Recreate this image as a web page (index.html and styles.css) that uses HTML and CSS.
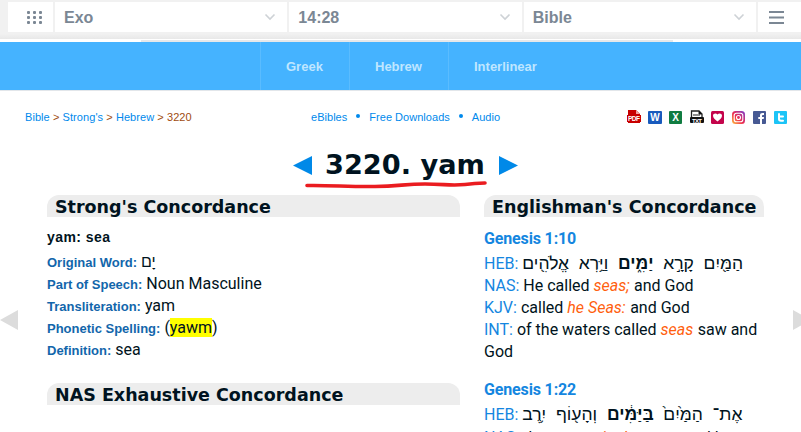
FILE: index.html
```
<!DOCTYPE html>
<html lang="en">
<head>
  <meta charset="UTF-8">
  <meta name="viewport" content="width=device-width, initial-scale=1.0">
  <title>Strong's Hebrew: 3220. yam</title>
  <link rel="stylesheet" href="styles.css">
</head>
<body>
  <header class="toolbar">
    <div class="tool grid-tool">
      <svg width="16" height="14" viewBox="0 0 16 14" fill="#7b8794">
        <rect x="0" y="1" width="3" height="3" rx="1"/><rect x="6" y="1" width="3" height="3" rx="1"/><rect x="12" y="1" width="3" height="3" rx="1"/>
        <rect x="0" y="6" width="3" height="3" rx="1"/><rect x="6" y="6" width="3" height="3" rx="1"/><rect x="12" y="6" width="3" height="3" rx="1"/>
        <rect x="0" y="11" width="3" height="3" rx="1"/><rect x="6" y="11" width="3" height="3" rx="1"/><rect x="12" y="11" width="3" height="3" rx="1"/>
      </svg>
    </div>
    <div class="tool select"><span>Exo</span><svg class="chevron" viewBox="0 0 12 8"><path d="M1.500 1.500 6 6l4.500-4.500"/></svg></div>
    <div class="tool select"><span>14:28</span><svg class="chevron" viewBox="0 0 12 8"><path d="M1.500 1.500 6 6l4.500-4.500"/></svg></div>
    <div class="tool select"><span>Bible</span><svg class="chevron" viewBox="0 0 12 8"><path d="M1.500 1.500 6 6l4.500-4.500"/></svg></div>
    <div class="tool menu-tool">
      <svg width="15" height="13" viewBox="0 0 15 13" fill="#7b8794"><path d="M0 0h15v2H0zM0 5.500h15v2H0zM0 11h15v2H0z"/></svg>
    </div>
  </header>
  <div class="strip"><i></i></div>
  <nav class="menu">
    <a class="greek">Greek</a>
    <a class="hebrew">Hebrew</a>
    <a class="inter">Interlinear</a>
  </nav>

  <div class="crumbs">
    <div class="path"><a>Bible</a> &gt; <a>Strong's</a> &gt; <a>Hebrew</a> &gt; 3220</div>
    <div class="links"><a>eBibles</a><b></b><a>Free Downloads</a><b></b><a>Audio</a></div>
    <div class="icons">
      <svg viewBox="0 0 14 14"><path fill="#c80000" d="M1 0h8l4 4v9H1z"/><path fill="#f0a0a0" d="M9 0v4h4z"/><rect y="5" width="14" height="7" fill="#c80000"/><text x="7" y="11" font-size="6.500" textLength="12">PDF</text></svg>
      <svg viewBox="0 0 14 14"><rect y="1" width="14" height="13" rx="1" fill="#185abd"/><text x="7" y="11" font-size="10">W</text></svg>
      <svg viewBox="0 0 14 14"><rect y="1" width="13" height="13" rx="1" fill="#107c41"/><text x="6.500" y="11" font-size="10">X</text></svg>
      <svg viewBox="0 0 14 14"><path fill="#fff" stroke="#222" stroke-width="1.300" d="M1.500 8V1h7.500l3 3v4"/><path stroke="#222" d="M9 1v3h3M3 5h7"/><rect y="7" width="14" height="6" rx="1" fill="#111"/><text x="7" y="12.500" font-size="6" textLength="10">TXT</text></svg>
      <svg viewBox="0 0 14 14"><rect y="1" width="13" height="13" rx="1.500" fill="#c4044b"/><path fill="#fff" d="M6.500 11.500C4 9.500 2 8 2 5.800 2 3.300 5.200 2.600 6.500 4.600 7.800 2.600 11 3.300 11 5.800c0 2.200-2 3.700-4.500 5.700z"/></svg>
      <svg viewBox="0 0 14 14"><defs><linearGradient id="insta" x1="0" y1="1" x2="1" y2="0"><stop offset="0" stop-color="#ffc43d"/><stop offset=".45" stop-color="#ee2a4f"/><stop offset="1" stop-color="#7a3fd0"/></linearGradient></defs><rect y="1" width="13" height="13" rx="3.500" fill="url(#insta)"/><g fill="none" stroke="#fff" stroke-width="1.100"><rect x="2.200" y="3.200" width="8.600" height="8.600" rx="2.300"/><circle cx="6.500" cy="7.500" r="2"/></g></svg>
      <svg viewBox="0 0 14 14"><rect y="1" width="13" height="13" rx="1" fill="#475993"/><path fill="#fff" d="M7 14V9H5.300V7H7V5.500C7 3.700 8 3 9.500 3H11v2H9.800c-.6 0-.8.300-.8.900V7h2l-.3 2H9v5z"/></svg>
      <svg viewBox="0 0 14 14"><rect y="1" width="13" height="13" rx="1" fill="#1cc4f7"/><path fill="none" stroke="#fff" stroke-width="2" stroke-linecap="round" d="M5 4v5q0 1.800 2 1.800h2M5 6.500h4"/></svg>
    </div>
  </div>

  <div class="title">
    <svg class="arrow" viewBox="0 0 19 19"><path d="M19 0v19L0 9.500z"/></svg>
    <h1>3220. yam
      <svg class="underline" viewBox="0 0 182 10"><path d="M2 5.500C25 5 45 7 70 6.500S100 4 120 4s25 2 40 0.500 10-1.500 20-1.500"/></svg>
    </h1>
    <svg class="arrow" viewBox="0 0 19 19"><path d="M0 0v19l19-9.500z"/></svg>
  </div>

  <main class="columns">
    <section class="left">
      <h2>Strong's Concordance</h2>
      <div class="entry">
        <p class="word">yam: sea</p>
        <p><b>Original Word:</b> <span class="heb" dir="rtl">יָם</span></p>
        <p><b>Part of Speech:</b> Noun Masculine</p>
        <p><b>Transliteration:</b> yam</p>
        <p><b>Phonetic Spelling:</b> (<mark>yawm</mark>)</p>
        <p><b>Definition:</b> sea</p>
      </div>
      <h2>NAS Exhaustive Concordance</h2>
    </section>
    <section class="right">
      <h2>Englishman's Concordance</h2>
      <div class="verse">
        <h3>Genesis 1:10</h3>
        <p><a>HEB:</a> <span class="heb" dir="rtl">הַמַּ֖יִם&nbsp; קָרָ֣א&nbsp; <strong>יַמִּ֑ים</strong>&nbsp; וַיַּ֥רְא&nbsp; אֱלֹהִ֖ים</span></p>
        <p><a>NAS:</a> He called <em>seas;</em> and God</p>
        <p><a>KJV:</a> called <em>he Seas:</em> and God</p>
        <p><a>INT:</a> of the waters called <em>seas</em> saw and God</p>
      </div>
      <div class="verse">
        <h3>Genesis 1:22</h3>
        <p><a>HEB:</a> <span class="heb" dir="rtl">אֶת־&nbsp; הַמַּ֙יִם֙&nbsp; <strong>בַּיַּמִּ֔ים</strong>&nbsp; וְהָע֖וֹף&nbsp; יִ֥רֶב</span></p>
        <p><a>NAS:</a> the waters <em>in the seas,</em> and let birds</p>
      </div>
    </section>
  </main>
  <svg class="page-arrow prev" viewBox="0 0 18 22"><path d="M18 1v20L0 11z"/></svg>
  <svg class="page-arrow next" viewBox="0 0 18 22"><path d="M0 1v20l18-10z"/></svg>
</body>
</html>
```

FILE: styles.css
```
* {
  box-sizing: border-box;
}

body {
  margin: 0;
  height: 432px;
  overflow: hidden;
  background: #fff;
  color: #001320;
  font-family: Roboto, "Liberation Sans", sans-serif;
  font-size: 16px;
  position: relative;
}

h1, h2, h3, p {
  margin: 0;
}

.toolbar {
  display: flex;
  gap: 2px;
  height: 39px;
  padding: 2px 0 7px 8px;
  background: linear-gradient(#f1f1f1 34px, #e8e8e8 39px);
}

.tool {
  display: flex;
  align-items: center;
  background: #fff;
}

.grid-tool {
  width: 45px;
  padding-left: 19px;
}

.menu-tool {
  width: 43px;
  padding-left: 11px;
}

.select {
  flex: 1;
  justify-content: space-between;
  padding: 0 11px 0 9px;
  color: #7b8794;
  font: bold 16px "Liberation Sans", sans-serif;
}

.select span {
  padding-top: 1px;
}

.chevron {
  width: 12px;
  height: 8px;
  fill: none;
  stroke: #ced2d6;
  stroke-width: 1.6;
}

.strip {
  height: 3px;
  padding-top: 1px;
  background: #fff;
}

.strip i {
  display: block;
  width: 532px;
  height: 2px;
  margin-left: 141px;
  background: #e6e8ea;
}

.menu {
  display: flex;
  height: 49px;
  padding-left: 260px;
  background: #45b3ff;
  border-bottom: 1px solid #e2e6ea;
  font: bold 13px/49px "Liberation Sans", sans-serif;
  color: #bfe6ff;
}

.menu a {
  padding-left: 25px;
  border-left: 1px solid #5abcff;
}

.greek {
  width: 89px;
}

.hebrew {
  width: 99px;
}

.crumbs {
  display: flex;
  height: 54px;
  padding-left: 25px;
  font: 11px/53px "Liberation Sans", sans-serif;
  color: #a04b10;
}

.crumbs a {
  color: #0089ec;
}

.path {
  width: 286px;
  letter-spacing: 0.07px;
}

.links {
  display: flex;
  width: 316px;
  letter-spacing: 0.03px;
}

.links b {
  width: 4px;
  height: 4px;
  margin: 23px 9px 0;
  border-radius: 50%;
  background: #0089ec;
}

.icons {
  display: flex;
  gap: 7px;
  padding-top: 19px;
}

.icons svg {
  width: 14px;
  height: 14px;
}

.icons text {
  fill: #fff;
  font-family: "Liberation Sans", sans-serif;
  font-weight: bold;
  text-anchor: middle;
}

.title {
  display: flex;
  height: 50px;
  padding: 0 0 0 293px;
}

.arrow {
  width: 19px;
  height: 19px;
  margin-top: 11px;
  fill: #0089e8;
}

h1 {
  position: relative;
  width: 160px;
  margin: 0 14px 0 13px;
  font: bold 27.2px/40px "DejaVu Sans", sans-serif;
  white-space: nowrap;
}

.underline {
  position: absolute;
  left: -20px;
  top: 35px;
  width: 182px;
  height: 10px;
  fill: none;
  stroke: #ea1c20;
  stroke-width: 3.6;
  stroke-linecap: round;
}

.columns {
  display: flex;
  gap: 24px;
  padding: 0 37px 0 47px;
}

.left {
  width: 413px;
}

.right {
  width: 280px;
}

h2 {
  height: 22px;
  padding-left: 8px;
  border-radius: 12px 12px 0 0;
  background: #ededed;
  font: bold 17.5px/24px "DejaVu Sans", sans-serif;
  white-space: nowrap;
}

.right h2 {
  letter-spacing: 0.04px;
}

.entry {
  height: 166px;
  padding-top: 8px;
}

.entry p {
  height: 22px;
  line-height: 24px;
}

.entry .word {
  height: 25px;
  font: bold 14px/25px "Liberation Sans", sans-serif;
  letter-spacing: 0.45px;
}

.entry b {
  color: #1266ab;
  font: bold 13px "Liberation Sans", sans-serif;
}

mark {
  background: #ff0;
  color: inherit;
}

.verse {
  padding-top: 10px;
  margin-bottom: 5px;
}

.verse p,
.verse h3 {
  line-height: 22px;
}

.verse:last-child p:last-child {
  padding-top: 1px;
}

h3 {
  padding: 1px 0 3px;
  color: #1486e0;
  font-size: 16px;
  font-weight: 700;
  letter-spacing: -0.15px;
}

.verse a {
  color: #1486e0;
}

.verse em {
  color: #ff5f0f;
  margin-right: 0.5px;
}

.heb {
  font-family: "Liberation Sans", sans-serif;
  line-height: 1;
  white-space: nowrap;
}

.verse .heb {
  font-size: 17.5px;
}

.page-arrow {
  position: absolute;
  top: 309px;
  width: 18px;
  height: 22px;
  fill: #dcdcdc;
}

.prev {
  left: 0;
}

.next {
  left: 793px;
}
```
